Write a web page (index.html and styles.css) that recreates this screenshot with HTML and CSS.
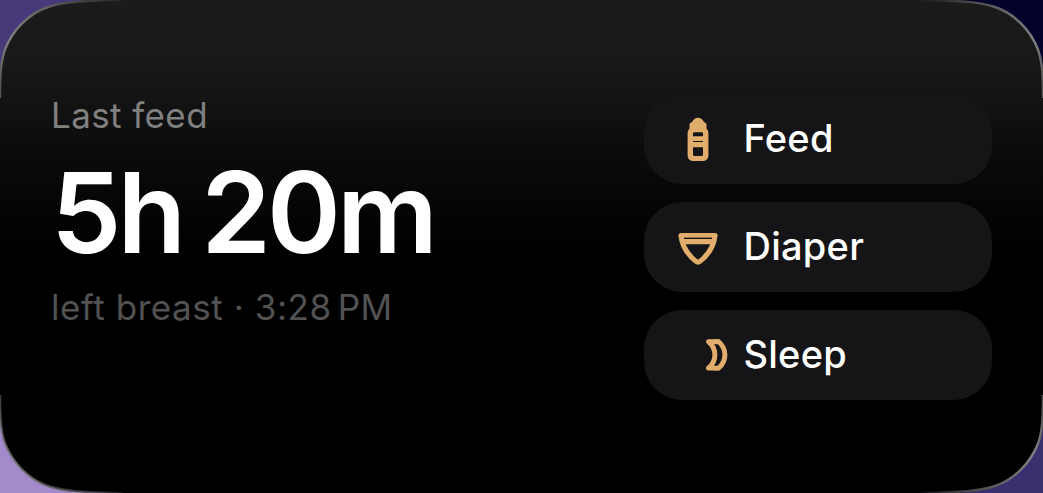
FILE: index.html
```html
<!DOCTYPE html>
<html lang="en">
<head>
<meta charset="utf-8">
<title>Last feed</title>
<link rel="stylesheet" href="styles.css">
</head>
<body>
<main class="widget">
  <svg class="backdrop" viewBox="0 0 1043 493" aria-hidden="true">
    <defs>
      <linearGradient id="surface" x1="0" y1="0" x2="0" y2="493" gradientUnits="userSpaceOnUse">
        <stop offset="0" stop-color="#1b1b1b"/>
        <stop offset=".12" stop-color="#191919"/>
        <stop offset=".19" stop-color="#141414"/>
        <stop offset=".27" stop-color="#0e0e0e"/>
        <stop offset=".38" stop-color="#070707"/>
        <stop offset=".52" stop-color="#000"/>
      </linearGradient>
      <linearGradient id="rim" x1="0" y1="90" x2="125" y2="0" gradientUnits="userSpaceOnUse">
        <stop offset="0" stop-color="#555"/>
        <stop offset=".25" stop-color="#808080"/>
        <stop offset=".55" stop-color="#606060"/>
        <stop offset=".8" stop-color="#3c3c3c"/>
        <stop offset="1" stop-color="#3c3c3c" stop-opacity="0"/>
      </linearGradient>
      <path id="edge" d="M0 98C0 76 .5 62 5 49.500C12.500 30 29 13 49.500 6.500C64 2 80 .8 125 0"/>
      <path id="outside" d="M-2-2V98H0C0 76 .5 62 5 49.500C12.500 30 29 13 49.500 6.500C64 2 80 .8 125 0V-2Z"/>
    </defs>
    <rect width="1043" height="493" fill="url(#surface)"/>
    <use href="#outside" fill="#48397b"/>
    <use href="#outside" transform="translate(1043 0) scale(-1 1)" fill="#03022b"/>
    <use href="#outside" transform="translate(0 493) scale(1 -1)" fill="#a38acb"/>
    <use href="#outside" transform="translate(1043 493) scale(-1 -1)" fill="#3c2f70"/>
    <g fill="none" stroke="url(#rim)" stroke-width="2.400">
      <use href="#edge"/>
      <use href="#edge" transform="translate(1043 0) scale(-1 1)"/>
      <use href="#edge" transform="translate(0 493) scale(1 -1)" opacity=".75"/>
      <use href="#edge" transform="translate(1043 493) scale(-1 -1)"/>
    </g>
  </svg>
  <section class="summary">
    <p class="caption">Last feed</p>
    <p class="elapsed">5h 20m</p>
    <p class="detail">left breast · 3:28<span class="thin"></span>PM</p>
  </section>
  <nav class="actions">
    <button class="action">
      <svg class="icon" viewBox="0 0 56 56" aria-hidden="true">
        <path class="solid" d="M19.500 22V13.500Q19.500 11.700 22 11.300Q24 6.800 28 6.800Q32 6.800 34 11.300Q36.500 11.700 36.500 13.500V22Z"/>
        <rect class="solid" x="17.600" y="16.500" width="20.800" height="33.500" rx="5.500"/>
        <path class="hole" d="M23 22.500Q23 21.300 24.200 21.300H31.800Q33 21.300 33 22.500V25.200H23ZM23 29.900H33V30.900H23ZM23 36.200H33V43.500Q33 45 31.500 45H24.500Q23 45 23 43.500Z"/>
      </svg>
      <span>Feed</span>
    </button>
    <button class="action">
      <svg class="icon" viewBox="0 0 56 56" aria-hidden="true">
        <path class="line" d="M10.900 16.600H45.100C43.800 26.500 38 36 30.300 42.100Q28 44 25.700 42.100C18 36 12.200 26.500 10.900 16.600Z"/>
        <path class="solid" d="M12 20H44L41 25.300H15Z"/>
        <path class="hole" d="M14 18.600H42V19.700H14Z"/>
      </svg>
      <span>Diaper</span>
    </button>
    <button class="action">
      <svg class="icon" viewBox="0 0 56 56" aria-hidden="true">
        <path class="line" d="M38.500 14.700L48.500 14.500C57 22 57 34 48.500 41.200L38.500 41C47 34 47 22 38.500 14.700Z"/>
      </svg>
      <span>Sleep</span>
    </button>
  </nav>
</main>
</body>
</html>
```
FILE: styles.css
```css
* { box-sizing: border-box; }

body {
  margin: 0;
  background: #000;
  font-family: Inter, "Liberation Sans", sans-serif;
}

.widget {
  position: relative;
  display: flex;
  justify-content: space-between;
  width: 1043px;
  height: 493px;
  padding: 94px 51px 0;
  overflow: hidden;
}

.backdrop {
  position: absolute;
  inset: 0;
  width: 100%;
  height: 100%;
}

.summary, .actions {
  position: relative;
  display: flex;
  flex-direction: column;
}

.summary p {
  margin: 0;
  white-space: nowrap;
}

.caption {
  color: #808080;
  font-size: 35px;
  line-height: 42px;
  letter-spacing: .4px;
}

.summary .elapsed {
  margin-top: 8px;
  color: #fff;
  font-size: 112px;
  font-weight: 600;
  line-height: 136px;
  letter-spacing: -4px;
  word-spacing: -5px;
}

.summary .detail {
  margin-top: 5px;
  color: #525252;
  font-size: 35px;
  line-height: 44px;
  letter-spacing: .55px;
}

.thin {
  display: inline-block;
  width: 6px;
}

.actions { gap: 18px; }

.action {
  display: flex;
  align-items: center;
  gap: 17.500px;
  width: 348px;
  height: 90px;
  padding: 0 26px;
  border: 0;
  border-radius: 38px;
  background: #151517;
  color: #fff;
  font: 500 38px/46px Inter, "Liberation Sans", sans-serif;
  letter-spacing: .25px;
}

.action span { padding-bottom: 2px; }

.icon {
  flex: none;
  width: 56px;
  height: 56px;
  overflow: visible;
}

.icon .solid { fill: #e1ad6c; }
.icon .hole { fill: #151517; }

.icon .line {
  fill: none;
  stroke: #e1ad6c;
  stroke-width: 5;
  stroke-linecap: round;
  stroke-linejoin: round;
}
```
